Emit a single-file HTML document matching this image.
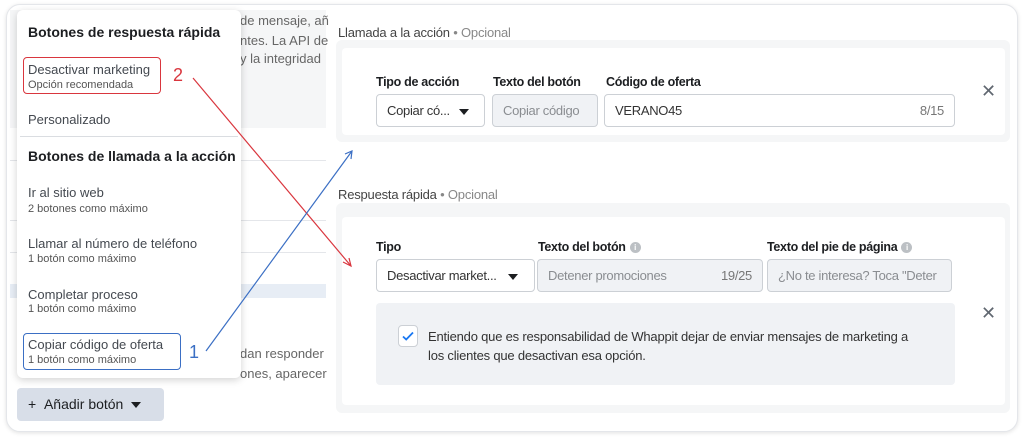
<!DOCTYPE html><html><head><meta charset="utf-8"><style>
*{box-sizing:border-box;margin:0;padding:0}
body{width:1024px;height:437px;background:#fff;font-family:"Liberation Sans",sans-serif;position:relative;overflow:hidden;color:#1c1e21}
.a{position:absolute}
.t{white-space:nowrap}
.card{left:6px;top:4px;width:1012px;height:428px;border:1px solid #e4e6ea;border-radius:14px;box-shadow:0 1px 4px rgba(0,0,0,.12);background:#fff}
.menu{left:17px;top:10px;width:224px;height:368px;background:#fff;border-radius:6px;box-shadow:0 2px 8px rgba(0,0,0,.18)}
.h{font-weight:bold;font-size:14px;color:#1c1e21}
.it{font-size:13px;color:#444950}
.sub{font-size:11px;color:#555}
.gbox{background:#f5f6f7;border-radius:6px}
.wbox{background:#fff;border-radius:4px}
.lbl{font-size:13px;color:#444;letter-spacing:-.2px}
.lbl span{color:#888}
.fl{font-size:12.5px;font-weight:bold;color:#1c1e21;letter-spacing:-.3px}
.inp{border:1px solid #ccd0d5;border-radius:4px;background:#fff;height:33px;font-size:13px;color:#333;padding:0 10px;line-height:31px;letter-spacing:-.3px}
.dis{background:#f0f2f5;color:#8a8d91}
.tri{display:inline-block;width:0;height:0;border-left:5px solid transparent;border-right:5px solid transparent;border-top:6px solid #1c1e21;vertical-align:middle}
.x{font-size:18px;color:#606770}
.info{display:inline-block;width:11px;height:11px;border-radius:50%;background:#bcc0c4;color:#fff;font-size:8px;text-align:center;line-height:11px;font-weight:bold;vertical-align:1px;margin-left:4px}
</style></head><body>
<div class="a card"></div>
<div class="a" style="left:10px;top:10px;width:316px;height:118px;background:#f5f6f7"></div>
<div class="a" style="left:10px;top:160px;width:316px;height:1px;background:#e4e6ea"></div>
<div class="a" style="left:10px;top:220px;width:316px;height:1px;background:#e4e6ea"></div>
<div class="a" style="left:10px;top:252px;width:316px;height:1px;background:#e4e6ea"></div>
<div class="a" style="left:10px;top:284px;width:316px;height:14px;background:#e7edf5"></div>
<div class="a t" style="left:240px;top:13px;font-size:13px;color:#666">de mensaje, añ</div>
<div class="a t" style="left:240px;top:33px;font-size:13px;color:#666">ntes. La API de</div>
<div class="a t" style="left:240px;top:51px;font-size:13px;color:#666">y la integridad</div>
<div class="a t" style="left:240px;top:346px;font-size:13px;color:#666">dan responder</div>
<div class="a t" style="left:240px;top:366px;font-size:13px;color:#666">ones, aparecer</div>
<div class="a menu"></div>
<div class="a t h" style="left:28px;top:24px">Botones de respuesta rápida</div>
<div class="a" style="left:23px;top:57px;width:138px;height:37px;border:1.5px solid #d9363e;border-radius:4px"></div>
<div class="a t it" style="left:28px;top:62px">Desactivar marketing</div>
<div class="a t sub" style="left:28px;top:79px">Opción recomendada</div>
<div class="a t it" style="left:28px;top:112px">Personalizado</div>
<div class="a" style="left:20px;top:136px;width:218px;height:1px;background:#dadde1"></div>
<div class="a t h" style="left:28px;top:148px">Botones de llamada a la acción</div>
<div class="a t it" style="left:28px;top:185px">Ir al sitio web</div>
<div class="a t sub" style="left:28px;top:203px">2 botones como máximo</div>
<div class="a t it" style="left:28px;top:236px">Llamar al número de teléfono</div>
<div class="a t sub" style="left:28px;top:253px">1 botón como máximo</div>
<div class="a t it" style="left:28px;top:287px">Completar proceso</div>
<div class="a t sub" style="left:28px;top:303px">1 botón como máximo</div>
<div class="a" style="left:23px;top:333px;width:158px;height:37px;border:1.5px solid #3b6fc4;border-radius:4px"></div>
<div class="a t it" style="left:28px;top:337px">Copiar código de oferta</div>
<div class="a t sub" style="left:28px;top:354px">1 botón como máximo</div>
<div class="a t" style="left:173px;top:65px;font-size:18px;color:#d9363e">2</div>
<div class="a t" style="left:189px;top:342px;font-size:18px;color:#3b6fc4">1</div>
<div class="a" style="left:17px;top:388px;width:147px;height:33px;background:#d8dee8;border-radius:4px"></div>
<div class="a t" style="left:28px;top:396px;font-size:14px;color:#1c1e21">+&nbsp;&nbsp;Añadir botón&nbsp;&nbsp;<span class="tri"></span></div>
<div class="a t lbl" style="left:338px;top:25px">Llamada a la acción <span>• Opcional</span></div>
<div class="a gbox" style="left:336px;top:40px;width:674px;height:102px"></div>
<div class="a wbox" style="left:342px;top:48px;width:663px;height:87px"></div>
<div class="a t fl" style="left:376px;top:75px">Tipo de acción</div>
<div class="a t fl" style="left:493px;top:75px">Texto del botón</div>
<div class="a t fl" style="left:606px;top:75px">Código de oferta</div>
<div class="a inp" style="left:376px;top:94px;width:109px">Copiar có... <span class="tri" style="margin-left:6px"></span></div>
<div class="a inp dis" style="left:492px;top:94px;width:106px">Copiar código</div>
<div class="a inp" style="left:604px;top:94px;width:351px">VERANO45<span style="position:absolute;right:10px;color:#777">8/15</span></div>
<div class="a x" style="left:981px;top:81px">✕</div>
<div class="a t lbl" style="left:338px;top:187px">Respuesta rápida <span>• Opcional</span></div>
<div class="a gbox" style="left:336px;top:203px;width:674px;height:210px"></div>
<div class="a wbox" style="left:342px;top:217px;width:663px;height:188px"></div>
<div class="a t fl" style="left:376px;top:240px">Tipo</div>
<div class="a t fl" style="left:538px;top:240px">Texto del botón<span class="info">i</span></div>
<div class="a t fl" style="left:767px;top:240px">Texto del pie de página<span class="info">i</span></div>
<div class="a inp" style="left:376px;top:259px;width:159px">Desactivar market... <span class="tri" style="margin-left:8px"></span></div>
<div class="a inp dis" style="left:537px;top:259px;width:226px">Detener promociones<span style="position:absolute;right:10px;color:#777">19/25</span></div>
<div class="a inp dis" style="left:767px;top:259px;width:185px;overflow:hidden">¿No te interesa? Toca "Deter</div>
<div class="a" style="left:376px;top:303px;width:579px;height:82px;background:#f0f2f5;border-radius:4px"></div>
<div class="a" style="left:398px;top:325px;width:20px;height:22px;background:#fff;border:1px solid #ccd0d5;border-radius:4px"></div>
<svg class="a" style="left:401px;top:329px" width="14" height="14" viewBox="0 0 14 14"><path d="M2 7.5l3.2 3L12 3.5" fill="none" stroke="#1877f2" stroke-width="1.8"/></svg>
<div class="a" style="left:428px;top:327px;font-size:13px;color:#333;line-height:19px;letter-spacing:-.2px;width:488px">Entiendo que es responsabilidad de Whappit dejar de enviar mensajes de marketing a los clientes que desactivan esa opción.</div>
<div class="a x" style="left:981px;top:303px">✕</div>
<svg class="a" style="left:0;top:0" width="1024" height="437">
<line x1="193" y1="78" x2="351" y2="266" stroke="#d9363e" stroke-width="1.2"/>
<path d="M343 262L351 266L349 258" fill="none" stroke="#d9363e" stroke-width="1.2"/>
<line x1="206" y1="351" x2="352" y2="151" stroke="#3b6fc4" stroke-width="1.2"/>
<path d="M345 154L352 151L351 159" fill="none" stroke="#3b6fc4" stroke-width="1.2"/>
</svg>
</body></html>
